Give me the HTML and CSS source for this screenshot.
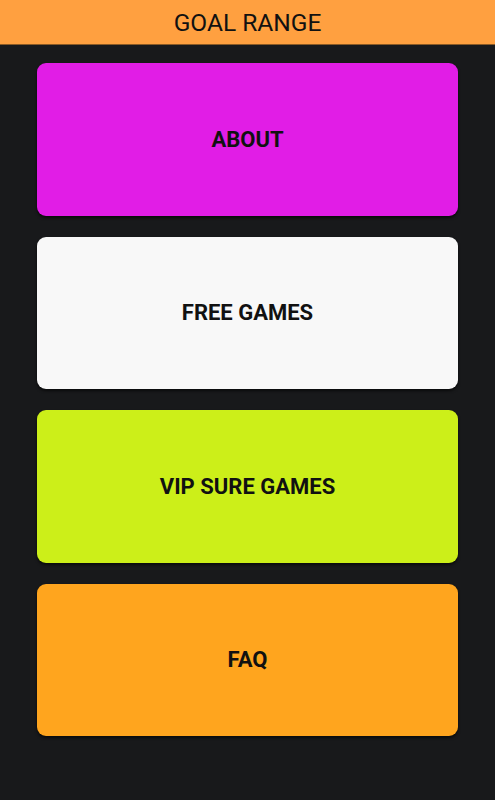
FILE: index.html
```html
<!DOCTYPE html>
<html>
<head>
<meta charset="utf-8">
<link rel="stylesheet" href="styles.css">
</head>
<body>
<header class="appbar">GOAL RANGE</header>
<main class="menu">
  <div class="card card-about">ABOUT</div>
  <div class="card card-free">FREE GAMES</div>
  <div class="card card-vip">VIP SURE GAMES</div>
  <div class="card card-faq">FAQ</div>
</main>
</body>
</html>
```
FILE: styles.css
```css
html, body {
  margin: 0;
  padding: 0;
  height: 100%;
  background: #18191b;
  font-family: Roboto, "Noto Sans", sans-serif;
}
.appbar {
  height: 45px;
  background: #ffa040;
  color: #111;
  font-size: 24.5px;
  display: flex;
  align-items: center;
  justify-content: center;
  border-bottom: 1px solid #8a5a26;
  box-sizing: border-box;
}
.menu {
  display: flex;
  flex-direction: column;
  gap: 21px;
  padding: 18px 37px 0 37px;
}
.card {
  height: 152.5px;
  border-radius: 9px;
  display: flex;
  align-items: center;
  justify-content: center;
  font-weight: 700;
  font-size: 22px;
  color: #111;
  box-shadow: 0 2px 3px rgba(0,0,0,0.6);
}
.card-about { background: #e11de6; }
.card-free { background: #f8f8f8; }
.card-vip { background: #ccef19; }
.card-faq { background: #ffa51e; }
```
